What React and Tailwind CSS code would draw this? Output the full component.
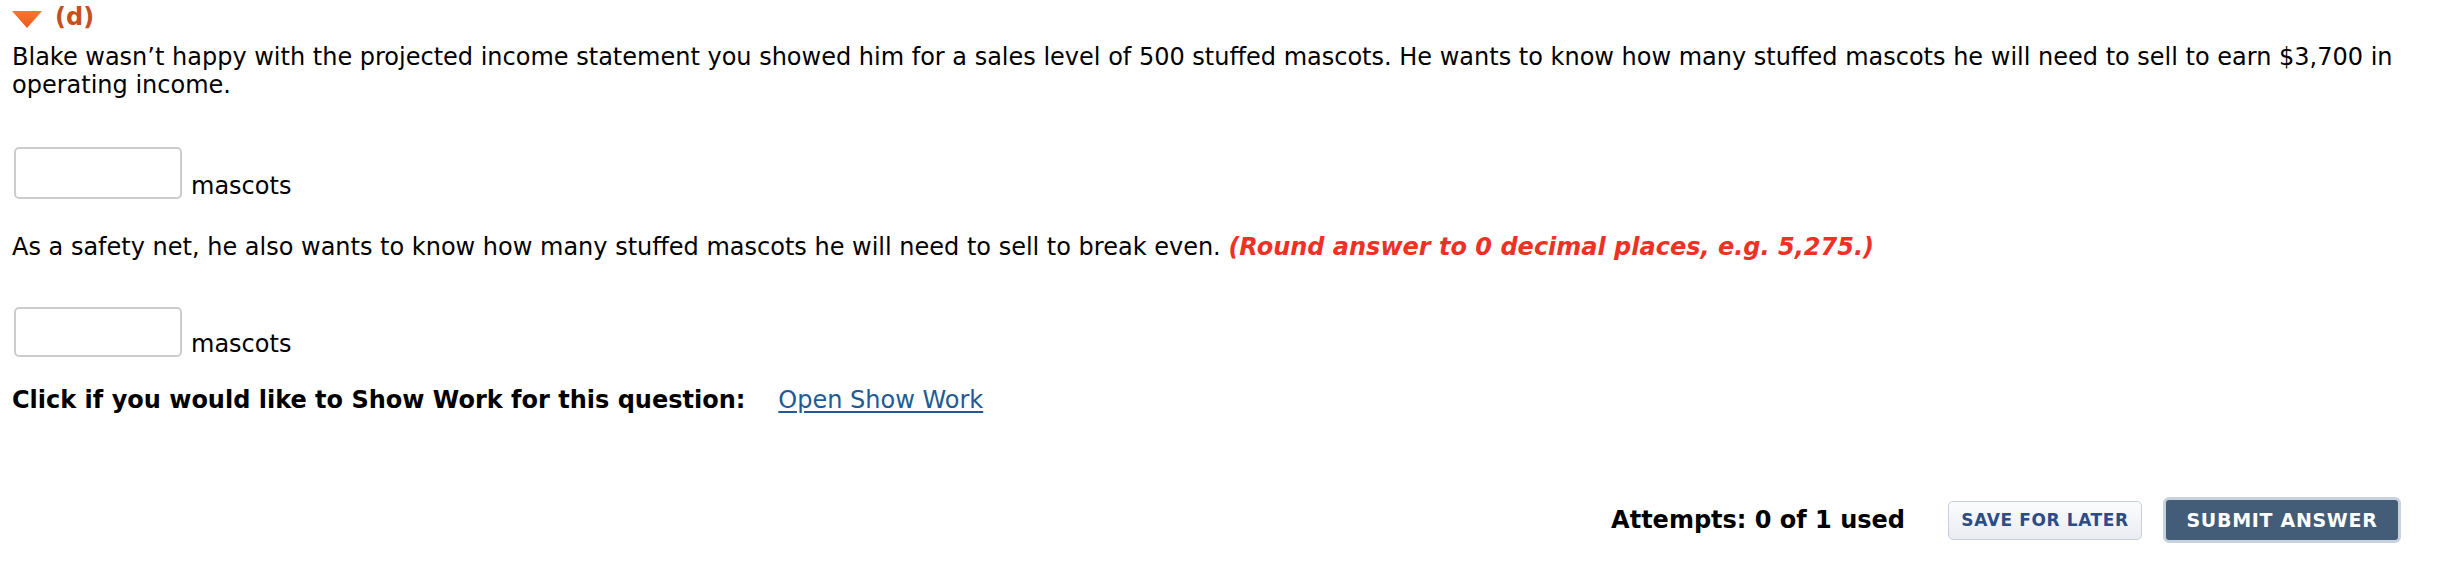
import React from "react";

export default function App() {
  return (
    <div className="bg-white min-h-[588px] w-full px-3 pt-0 text-black font-['DejaVu_Sans',sans-serif] text-[24px] leading-[28px]">
      <div className="flex items-center h-[34px] gap-[13px]">
        <svg width="30" height="17" viewBox="0 0 30 17" className="mt-[4px]">
          <defs>
            <linearGradient id="tri" x1="0" y1="0" x2="0" y2="1">
              <stop offset="0" stopColor="#f4772e" />
              <stop offset="1" stopColor="#ee5a1e" />
            </linearGradient>
          </defs>
          <polygon points="0,0 30,0 15,17" fill="url(#tri)" />
        </svg>
        <span className="font-bold text-[#c5501b] text-[24px]">(d)</span>
      </div>
      <p className="mt-[9px]">
        Blake wasn’t happy with the projected income statement you showed him for a sales level of 500 stuffed mascots. He wants to know how many stuffed mascots he will need to sell to earn $3,700 in operating income.
      </p>
      <div className="mt-[48px] flex items-end">
        <input
          type="text"
          className="ml-[2px] w-[168px] h-[52px] border-2 border-[#cccccc] rounded-[5px] bg-white outline-none"
        />
        <span className="ml-[9px] leading-[26px]">mascots</span>
      </div>
      <p className="mt-[34px]">
        As a safety net, he also wants to know how many stuffed mascots he will need to sell to break even.{" "}
        <span className="font-bold italic text-[#ee3124]">(Round answer to 0 decimal places, e.g. 5,275.)</span>
      </p>
      <div className="mt-[46px] flex items-end">
        <input
          type="text"
          className="ml-[2px] w-[168px] h-[50px] border-2 border-[#cccccc] rounded-[5px] bg-white outline-none"
        />
        <span className="ml-[9px] leading-[26px]">mascots</span>
      </div>
      <div className="mt-[29px] flex items-center">
        <span className="font-bold">Click if you would like to Show Work for this question:</span>
        <a href="#" className="ml-[33px] text-[#235a94] underline underline-offset-[3px]">Open Show Work</a>
      </div>
      <div className="mt-[83px] flex items-center justify-end pr-[39px]">
        <span className="font-bold mr-[43px]">Attempts: 0 of 1 used</span>
        <button className="w-[194px] h-[39px] rounded-[5px] border border-[#c6cfdb] bg-gradient-to-b from-[#fbfcfd] to-[#e9ecf1] text-[#2b4d85] font-bold text-[17px] tracking-[0.6px] leading-none">
          SAVE FOR LATER
        </button>
        <button className="ml-[21px] w-[238px] h-[46px] rounded-[6px] border-[3px] border-[#c8d2dd] bg-[#435c78] text-white font-bold text-[19px] tracking-[0.7px] leading-none">
          SUBMIT ANSWER
        </button>
      </div>
    </div>
  );
}
